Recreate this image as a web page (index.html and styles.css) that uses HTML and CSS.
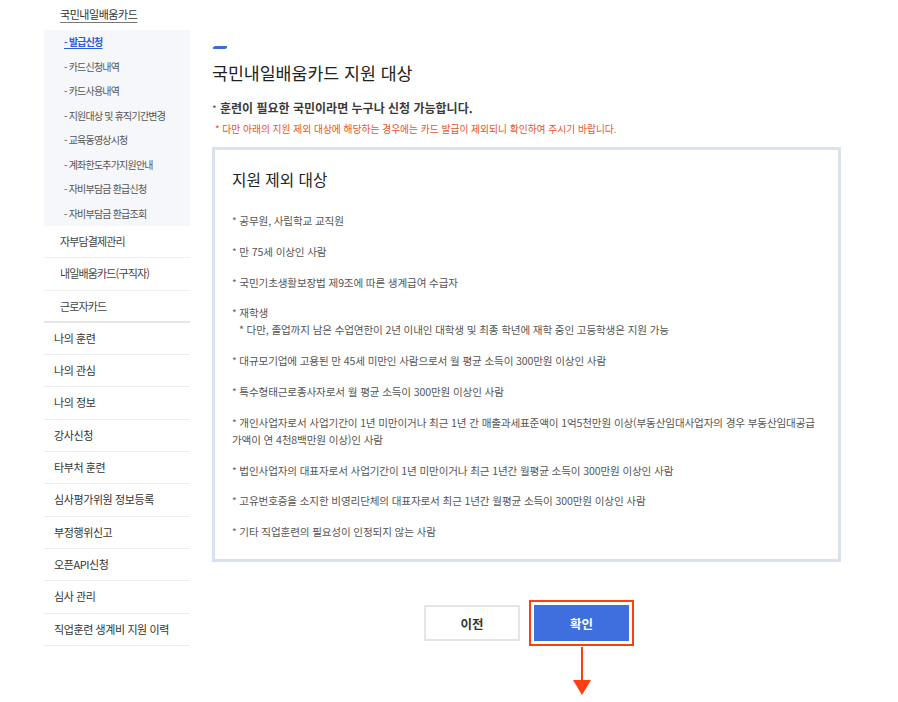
FILE: index.html
```html
<!DOCTYPE html>
<html lang="ko">
<head>
    <meta charset="UTF-8">
    <meta name="viewport" content="width=device-width, initial-scale=1.0">
    <title>국민내일배움카드 지원 대상</title>
    <link rel="stylesheet" href="styles.css">
</head>
<body>
    <div class="page">
        <nav class="side">
            <div class="side-top">국민내일배움카드</div>
            <ul class="sub">
                <li class="on">- 발급신청</li>
                <li>- 카드신청내역</li>
                <li>- 카드사용내역</li>
                <li>- 지원대상 및 휴직기간변경</li>
                <li>- 교육동영상시청</li>
                <li>- 계좌한도추가지원안내</li>
                <li>- 자비부담금 환급신청</li>
                <li>- 자비부담금 환급조회</li>
            </ul>
            <ul class="lv2">
                <li>자부담결제관리</li>
                <li>내일배움카드(구직자)</li>
                <li>근로자카드</li>
            </ul>
            <ul class="lv1">
                <li>나의 훈련</li>
                <li>나의 관심</li>
                <li>나의 정보</li>
                <li>강사신청</li>
                <li>타부처 훈련</li>
                <li>심사평가위원 정보등록</li>
                <li>부정행위신고</li>
                <li>오픈API신청</li>
                <li>심사 관리</li>
                <li>직업훈련 생계비 지원 이력</li>
            </ul>
        </nav>

        <main class="content">
            <span class="bar"></span>
            <h2 class="title">국민내일배움카드 지원 대상</h2>
            <p class="lead"><span class="star">*</span> 훈련이 필요한 국민이라면 누구나 신청 가능합니다.</p>
            <p class="note">* 다만 아래의 지원 제외 대상에 해당하는 경우에는 카드 발급이 제외되니 확인하여 주시기 바랍니다.</p>

            <div class="box">
                <h3 class="box-title">지원 제외 대상</h3>
                <ul class="ex">
                    <li><span class="star">*</span> 공무원, 사립학교 교직원</li>
                    <li><span class="star">*</span> 만 75세 이상인 사람</li>
                    <li><span class="star">*</span> 국민기초생활보장법 제9조에 따른 생계급여 수급자</li>
                    <li><span class="star">*</span> 재학생
                        <span class="ex-sub">* 다만, 졸업까지 남은 수업연한이 2년 이내인 대학생 및 최종 학년에 재학 중인 고등학생은 지원 가능</span>
                    </li>
                    <li><span class="star">*</span> 대규모기업에 고용된 만 45세 미만인 사람으로서 월 평균 소득이 300만원 이상인 사람</li>
                    <li><span class="star">*</span> 특수형태근로종사자로서 월 평균 소득이 300만원 이상인 사람</li>
                    <li><span class="star">*</span> 개인사업자로서 사업기간이 1년 미만이거나 최근 1년 간 매출과세표준액이 1억5천만원 이상(부동산임대사업자의 경우 부동산임대공급<br>가액이 연 4천8백만원 이상)인 사람</li>
                    <li><span class="star">*</span> 법인사업자의 대표자로서 사업기간이 1년 미만이거나 최근 1년간 월평균 소득이 300만원 이상인 사람</li>
                    <li><span class="star">*</span> 고유번호증을 소지한 비영리단체의 대표자로서 최근 1년간 월평균 소득이 300만원 이상인 사람</li>
                    <li><span class="star">*</span> 기타 직업훈련의 필요성이 인정되지 않는 사람</li>
                </ul>
            </div>

            <div class="btns">
                <button class="btn">이전</button>
                <div class="mark">
                    <button class="btn btn-blue">확인</button>
                    <div class="arrow-line"></div>
                    <div class="arrow-head"></div>
                </div>
            </div>
        </main>
    </div>
</body>
</html>
```

FILE: styles.css
```css
body { margin: 0; font-family: "Noto Sans CJK KR", "Noto Sans", sans-serif; background: #fff; color: #333; }
ul { list-style: none; margin: 0; padding: 0; }
h2, h3, p { margin: 0; font-weight: normal; }

.page { display: flex; align-items: flex-start; }

/* 좌측 메뉴 */
.side { width: 146px; margin-left: 44px; }
.side-top { height: 30px; line-height: 28px; padding-left: 16px; font-size: 11px; letter-spacing: -0.45px; color: #333; text-decoration: underline; text-underline-offset: 3px; text-decoration-color: #777; }
.sub { background: #f5f7fb; padding-left: 20px; }
.sub li { line-height: 24.5px; font-size: 10px; letter-spacing: -0.8px; color: #555; }
.sub li.on { color: #2a5fd4; font-weight: bold; text-decoration: underline; text-underline-offset: 2px; }
.lv2 li { line-height: 31.3px; border-bottom: 1px solid #f0f0f0; padding-left: 16px; font-size: 11px; letter-spacing: -0.85px; color: #444; }
.lv2 li:last-child { border-bottom: none; line-height: 30.3px; }
.lv1 { border-top: 2px solid #e6e6e6; }
.lv1 li { line-height: 31.3px; border-bottom: 1px solid #ececec; padding-left: 10px; font-size: 11px; letter-spacing: -0.4px; color: #333; }

/* 본문 */
.content { width: 629px; margin-left: 22px; padding-top: 46px; }
.bar { display: block; width: 14px; height: 3px; margin-left: 1px; background: #3a6bd6; border-radius: 2px; transform: skewX(-25deg); margin-bottom: 11px; }
.title { font-size: 17.3px; line-height: 26px; color: #222; }
.lead { margin-top: 13px; font-size: 12px; line-height: 18px; font-weight: bold; color: #3a3a3a; }
.lead .star { font-weight: normal; color: #555; }
.note { margin-top: 3px; padding-left: 3px; font-size: 9.75px; line-height: 16px; color: #e8531f; }

.box { margin-top: 10px; border: 3px solid #d9e1ed; padding: 18px 17px 19px; }
.box-title { font-size: 15.7px; line-height: 24px; color: #222; }
.ex { margin-top: 20px; }
.ex li { font-size: 10.6px; line-height: 17px; letter-spacing: -0.15px; color: #555; margin-bottom: 13.8px; }
.ex li:last-child { margin-bottom: 0; }
.ex-sub { display: block; padding-left: 7px; }
.star { font-size: 10px; color: #666; }

/* 버튼 */
.btns { display: flex; justify-content: center; align-items: flex-start; gap: 14px; margin-top: 43px; }
.btn { width: 96px; height: 36px; border: 2px solid #e5e5e5; background: #fff; font-family: inherit; font-size: 12.5px; font-weight: bold; color: #333; padding: 0; }
.mark { display: flex; flex-direction: column; align-items: center; }
.btn-blue { width: 95px; background: #3f6fde; border-color: #3f6fde; color: #fff; outline: 2px solid #ff3d12; outline-offset: 3px; }
.arrow-line { width: 2px; height: 33px; margin-top: 6px; background: #ff3d12; }
.arrow-head { width: 0; height: 0; border-left: 9px solid transparent; border-right: 9px solid transparent; border-top: 15px solid #ff3d12; }
```
